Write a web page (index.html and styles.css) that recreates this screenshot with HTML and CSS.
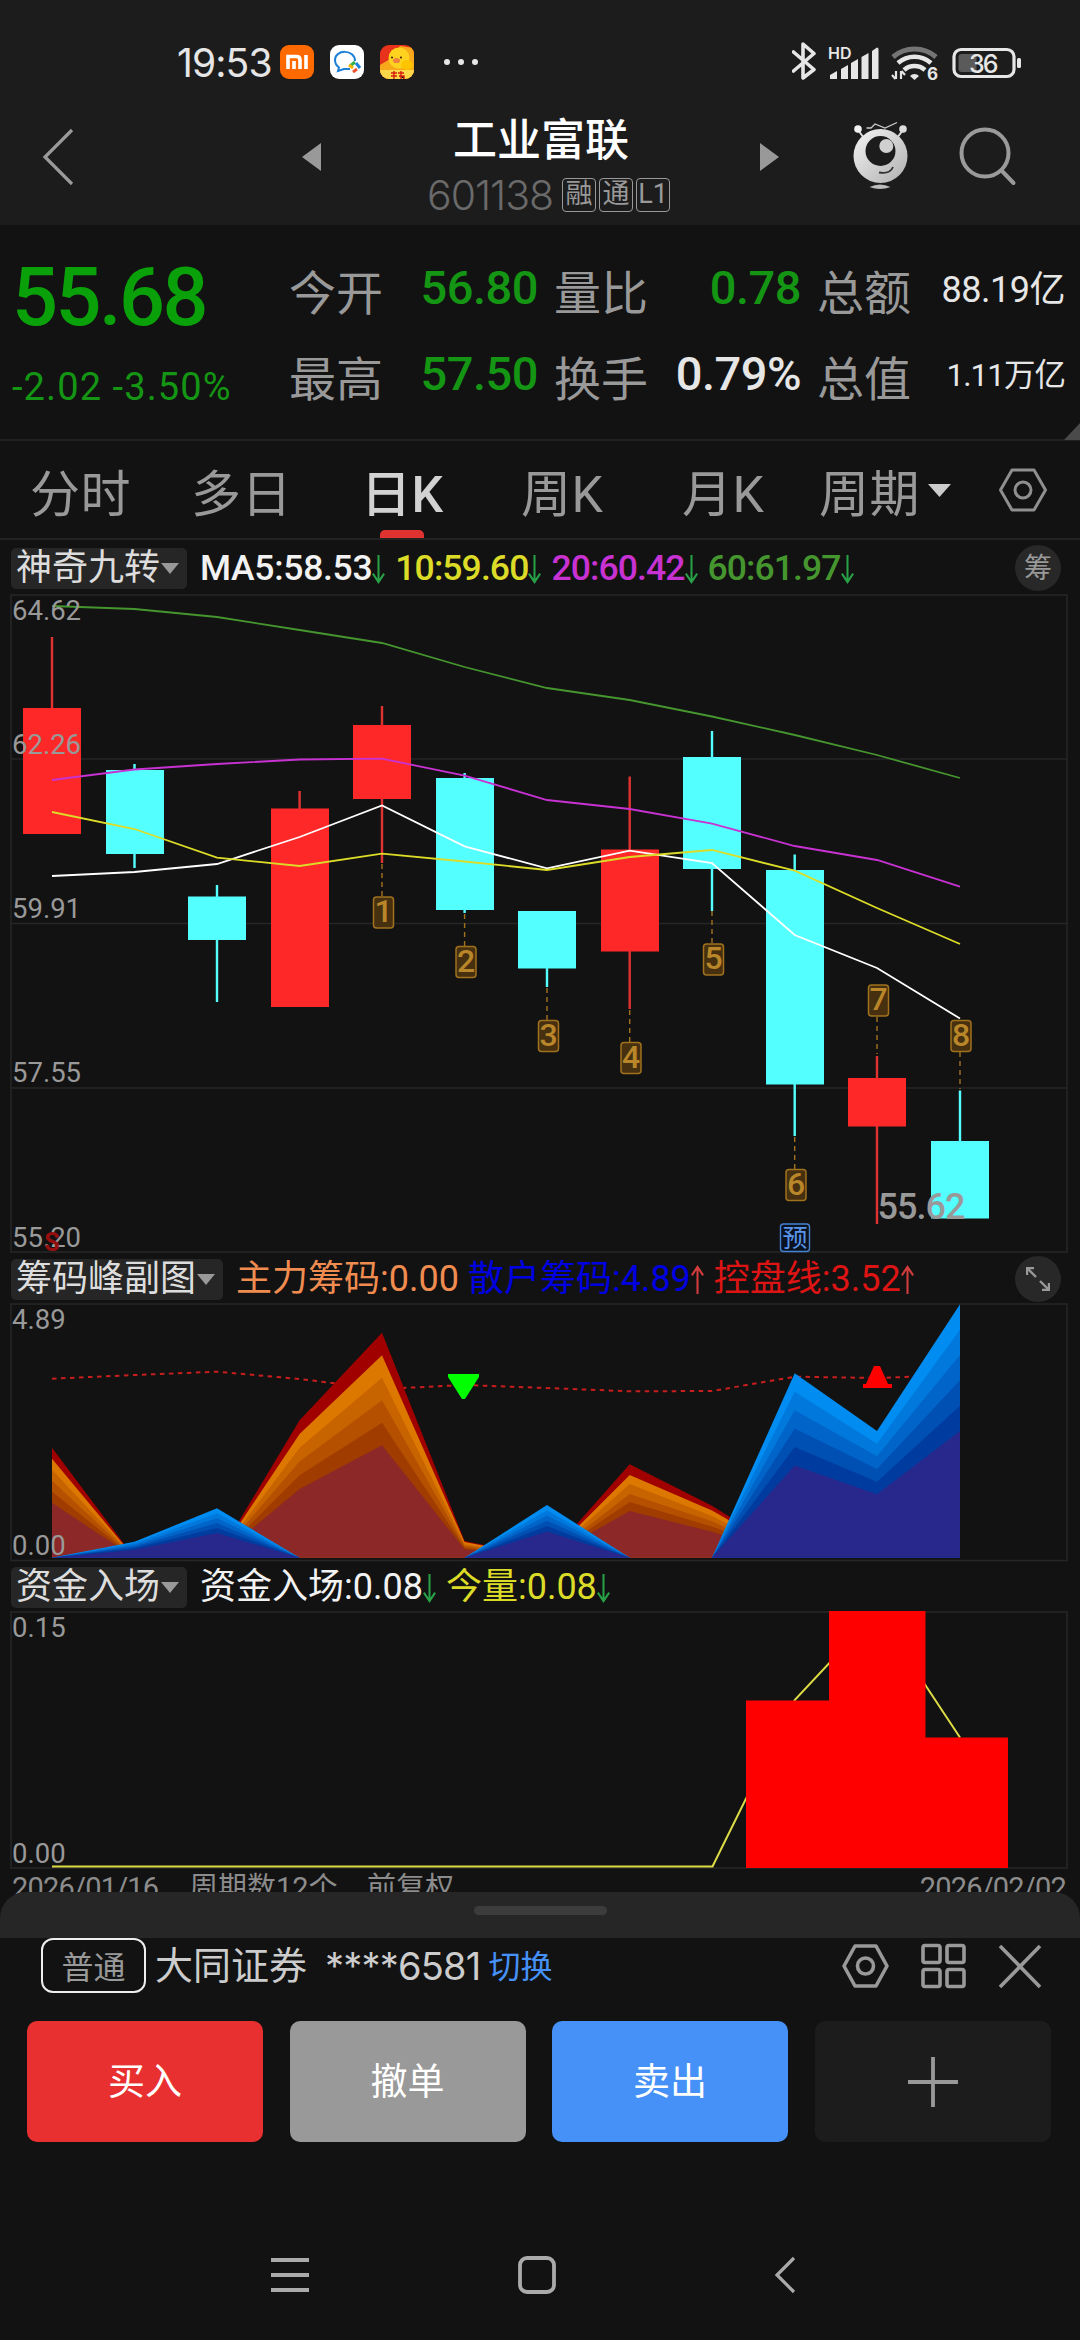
FILE: index.html
```html
<!DOCTYPE html>
<html lang="zh-CN">
<head>
    <meta charset="UTF-8">
    <meta name="viewport" content="width=device-width, initial-scale=1.0">
    <title>工业富联 601138</title>
    <link rel="stylesheet" href="styles.css">
</head>
<body>
    <div class="status-bar">
        <span class="clock">19:53</span>
        <svg class="app-icon" width="34" height="34" viewBox="0 0 34 34">
            <rect width="34" height="34" rx="9" fill="#ff6a00"/>
            <path d="M8 24V11.500h8.500q3.500 0 3.500 3.500V24M14 16v8M26 10V24" fill="none" stroke="#fff" stroke-width="3.600"/>
        </svg>
        <svg class="app-icon" width="34" height="34" viewBox="0 0 34 34">
            <rect width="34" height="34" rx="9" fill="#fff"/>
            <path d="M25 16C25 4 5 4 5 15c0 4 2 6 4 7.500L8 26l6-2h6" fill="none" stroke="#1c7fd6" stroke-width="2"/>
            <path d="M20 21l5-4" stroke="#35b34a" stroke-width="3"/>
            <path d="M26 18l4 5" stroke="#1c7fd6" stroke-width="3"/>
            <path d="M19 20l4 3" stroke="#f7b500" stroke-width="3"/>
            <path d="M23 27l4-3" stroke="#f0532d" stroke-width="3"/>
        </svg>
        <svg class="app-icon" width="34" height="34" viewBox="0 0 34 34">
            <defs>
                <clipPath id="duckClip"><rect width="34" height="34" rx="9"/></clipPath>
            </defs>
            <g clip-path="url(#duckClip)">
                <rect width="34" height="34" fill="#e8331c"/>
                <path d="M0 20L10 14 20 1 34 3V34H0z" fill="#f7a81b"/>
                <circle cx="19" cy="13" r="10.500" fill="#ffd21f"/>
                <ellipse cx="27" cy="20" rx="6" ry="5" fill="#ffc400"/>
                <ellipse cx="16.500" cy="15.500" rx="3.500" ry="2.600" fill="#f08040"/>
                <circle cx="12" cy="12.500" r="1" fill="#3a1a00"/>
                <circle cx="21" cy="12.500" r="1" fill="#3a1a00"/>
                <rect y="25" width="34" height="9" fill="#ffd84a"/>
                <path d="M11 28h6M11 31h6M14 26v8M18 28h6M19 31h5v3M21 26v8" stroke="#d3200f" stroke-width="1.400"/>
            </g>
        </svg>
        <span class="dots"><i></i><i></i><i></i></span>
        <svg class="signals" width="240" height="44" viewBox="0 0 240 44">
            <g fill="none" stroke="#e6e6e6">
                <path d="M1.500 12L22 29.500 11 38V4L22 13.500 1.500 31" stroke-width="3.600" stroke-linejoin="round" stroke-linecap="round"/>
                <path d="M101 17a33 33 0 0 1 43 0" stroke="#757575" stroke-width="5"/>
                <path d="M106 23a25 25 0 0 1 33 0" stroke-width="4.600"/>
                <path d="M112 30a16 16 0 0 1 21 0" stroke-width="4.600"/>
                <path d="M104 31v8M100 35l3.500 4M109 39v-8M113 35l-3.500-4" stroke-width="2.200"/>
                <rect x="162" y="9.500" width="60" height="27" rx="7" stroke-width="3.200"/>
            </g>
            <g fill="#e6e6e6">
                <path d="M38 39v-4l7-4v8zM49 39V29l7-4v14zM59 39V23l7-4v20zM69.500 39V17l7-4v26zM80 39V11l5-3.500q1.500 0 1.500 2V39z"/>
                <path d="M118 36a6 6 0 0 1 9 0l-4.500 4z"/>
                <rect x="225" y="18" width="4" height="10" rx="1.500"/>
            </g>
            <rect x="166.500" y="14" width="18" height="18" rx="3" fill="#5a5a5a"/>
            <text x="36" y="18.500" class="hd">HD</text>
            <text x="135" y="40" class="six">6</text>
            <text x="177" y="32.500" class="battery">36</text>
        </svg>
    </div>

    <header>
        <svg class="back" width="34" height="58" viewBox="0 0 34 58"><path d="M31 2L4 29l27 27" fill="none" stroke="#9a9a9a" stroke-width="3.200"/></svg>
        <svg class="prev" width="19" height="28" viewBox="0 0 19 28"><path d="M19 0v28L0 14z" fill="#999"/></svg>
        <div class="title-box">
            <h1>工业富联</h1>
            <div class="code-row">
                <span class="code">601138</span>
                <span class="tag">融</span>
                <span class="tag">通</span>
                <span class="tag">L1</span>
            </div>
        </div>
        <svg class="next" width="19" height="28" viewBox="0 0 19 28"><path d="M0 0v28l19-14z" fill="#999"/></svg>
        <svg class="robot" width="60" height="72" viewBox="0 0 60 72">
            <defs>
                <linearGradient id="robotFill" x1="0" y1="0" x2="1" y2="1">
                    <stop offset="0" stop-color="#f4f4f4"/>
                    <stop offset="1" stop-color="#b0b0b0"/>
                </linearGradient>
            </defs>
            <path d="M7 9l6 8M52 9l-6 8" stroke="#ddd" stroke-width="2"/>
            <circle cx="7" cy="8" r="3.800" fill="#f2f2f2"/>
            <circle cx="52" cy="8" r="3.800" fill="#ddd"/>
            <path d="M15.500 7h4.500l4-4 10 4L46 1.500" fill="none" stroke="#ccc" stroke-width="1.300"/>
            <circle cx="29.500" cy="35" r="27" fill="url(#robotFill)"/>
            <circle cx="29.500" cy="30" r="15" fill="#1c1c1c"/>
            <circle cx="35.300" cy="25" r="7" fill="#d0d0d0"/>
            <path d="M28 51.500q11 2 14-5.500" fill="none" stroke="#333" stroke-width="1.800"/>
            <path d="M18.500 66q10.500-5 21 0-10.500 4-21 0z" fill="#bbb"/>
        </svg>
        <svg class="search" width="60" height="60" viewBox="0 0 60 60"><circle cx="26" cy="26" r="23.500" fill="none" stroke="#9a9a9a" stroke-width="4"/><path d="M43 44l11.500 12" stroke="#9a9a9a" stroke-width="4" stroke-linecap="round"/></svg>
    </header>

    <section class="quote">
        <div class="price-box">
            <div class="price">55.68</div>
            <div class="change">-2.02 -3.50%</div>
        </div>
        <div class="stats">
            <div class="stat"><label>今开</label><b class="down">56.80</b></div>
            <div class="stat"><label>量比</label><b class="down">0.78</b></div>
            <div class="stat"><label>总额</label><b class="amount">88.19亿</b></div>
            <div class="stat"><label>最高</label><b class="down">57.50</b></div>
            <div class="stat"><label>换手</label><b>0.79%</b></div>
            <div class="stat"><label>总值</label><b class="amount small">1.11万亿</b></div>
        </div>
        <i class="corner"></i>
    </section>

    <nav class="tabs">
        <a>分时</a>
        <a>多日</a>
        <a class="active">日K</a>
        <a>周K</a>
        <a>月K</a>
        <a>周期<svg width="23" height="13" viewBox="0 0 23 13"><path d="M0 0h23L11.500 13z" fill="#ccc"/></svg></a>
        <svg class="gear" width="50" height="46" viewBox="0 0 50 46"><path d="M14 3h22l11.500 20L36 43H14L2.500 23z" fill="none" stroke="#8f8f8f" stroke-width="3" stroke-linejoin="round"/><circle cx="25" cy="23" r="8" fill="none" stroke="#8f8f8f" stroke-width="3"/></svg>
    </nav>

    <!-- K线主图 -->
    <div class="legend first">
        <span class="pill">神奇九转<i></i></span>
        <span class="item white">MA5:58.53<svg class="arr" viewBox="0 0 16 32"><path d="M8 1v28M2 21l6 9 6-9"/></svg></span>
        <span class="item yellow">10:59.60<svg class="arr" viewBox="0 0 16 32"><path d="M8 1v28M2 21l6 9 6-9"/></svg></span>
        <span class="item magenta">20:60.42<svg class="arr" viewBox="0 0 16 32"><path d="M8 1v28M2 21l6 9 6-9"/></svg></span>
        <span class="item green">60:61.97<svg class="arr" viewBox="0 0 16 32"><path d="M8 1v28M2 21l6 9 6-9"/></svg></span>
        <span class="round">筹</span>
    </div>
    <svg class="chart" width="1080" height="660" viewBox="0 594 1080 660">
        <g class="grid">
            <rect x="11" y="595" width="1056" height="657"/>
            <path d="M11 759H1067M11 923.500H1067M11 1088H1067"/>
        </g>
        <g class="up">
            <path d="M52 637V708M299.600 791V809M382 706V863M629.700 776.500V1009M877 1056V1224"/>
            <rect x="23" y="708" width="58" height="126"/>
            <rect x="271" y="808.500" width="58" height="198.500"/>
            <rect x="353" y="725" width="58" height="74"/>
            <rect x="601" y="849.500" width="58" height="102"/>
            <rect x="848" y="1078" width="58" height="48.500"/>
        </g>
        <g class="fall">
            <path d="M134.500 764V868M217 885V1002M464.600 773V913M547 911V987M712 731V911M794.700 854.500V1136M960 1090.500V1219"/>
            <rect x="106" y="770" width="58" height="84"/>
            <rect x="188" y="896.500" width="58" height="43.500"/>
            <rect x="436" y="778" width="58" height="132"/>
            <rect x="518" y="911" width="58" height="57.500"/>
            <rect x="683" y="757" width="58" height="112"/>
            <rect x="766" y="870" width="58" height="214.500"/>
            <rect x="931" y="1141" width="58" height="77.500"/>
        </g>
        <g class="line">
            <polyline stroke="#46962f" points="52,606 134.500,609 217,617 299.600,630 382,643 464.600,667 547,688 629.700,700 712,716.500 794.700,735 877,755 960,778"/>
            <polyline stroke="#c832d2" points="52,780 134.500,769.500 217,764 299.600,759.500 382,758.700 464.600,775.600 547,800 629.700,809 712,823.700 794.700,846 877,860 960,886.600"/>
            <polyline stroke="#fff" points="52,876 134.500,872 217,864 299.600,837 382,805.500 464.600,846.300 547,868.400 629.700,850.600 712,863 794.700,935 877,968 960,1018.500"/>
            <polyline stroke="#dcdc28" points="52,812 134.500,829 217,857.600 299.600,866 382,853.700 464.600,861.500 547,870 629.700,857 712,850 794.700,870.600 877,908 960,944"/>
        </g>
        <g class="dash">
            <path d="M382 864V897M464.600 914V946M547 988V1020M629.700 1010V1042M712 911V944M794.700 1137V1169M877 1017V1054M960 1052V1089"/>
        </g>
        <g class="mark">
            <rect x="373.500" y="897" width="20" height="31" rx="3"/><text x="383.500" y="922">1</text>
            <rect x="456" y="946.500" width="20" height="31" rx="3"/><text x="466" y="971.500">2</text>
            <rect x="538.500" y="1020.500" width="20" height="31" rx="3"/><text x="548.500" y="1045.500">3</text>
            <rect x="621" y="1042.500" width="20" height="31" rx="3"/><text x="631" y="1067.500">4</text>
            <rect x="703.500" y="944" width="20" height="31" rx="3"/><text x="713.500" y="969">5</text>
            <rect x="786" y="1169.500" width="20" height="31" rx="3"/><text x="796" y="1194.500">6</text>
            <rect x="868.500" y="985" width="20" height="31" rx="3"/><text x="878.500" y="1010">7</text>
            <rect x="951" y="1020.500" width="20" height="31" rx="3"/><text x="961" y="1045.500">8</text>
        </g>
        <rect class="forecast-box" x="780.500" y="1224" width="29" height="27.500" rx="3"/>
        <text class="forecast" x="795" y="1247">预</text>
        <g class="axis">
            <text x="12" y="620">64.62</text>
            <text x="12" y="754">62.26</text>
            <text x="12" y="917.500">59.91</text>
            <text x="12" y="1082">57.55</text>
            <text x="12" y="1246.500">55.20</text>
            <text x="877.500" y="1218.500" class="low">55.62</text>
        </g>
        <text class="sell" x="52" y="1251">S</text>
    </svg>

    <!-- 筹码峰副图 -->
    <div class="legend">
        <span class="pill">筹码峰副图<i></i></span>
        <span class="item orange">主力筹码:0.00</span>
        <span class="item blue">散户筹码:4.89<svg class="arr rise" viewBox="0 0 16 32"><path d="M8 31V3M2 11l6-9 6 9"/></svg></span>
        <span class="item red">控盘线:3.52<svg class="arr rise" viewBox="0 0 16 32"><path d="M8 31V3M2 11l6-9 6 9"/></svg></span>
        <span class="round"><svg width="24" height="24" viewBox="0 0 24 24"><path d="M1 8V1h7M1 1l9 9M23 16v7h-7M23 23l-9-9" fill="none" stroke="#999" stroke-width="2.400"/></svg></span>
    </div>
    <svg class="chart" width="1080" height="259" viewBox="0 1303 1080 259">
        <g class="grid">
            <rect x="11" y="1304" width="1056" height="256.500"/>
        </g>
        <polyline class="control" points="52,1378.700 134.500,1375 217,1371.700 299.600,1379 382,1389 464.600,1385 547,1388 629.700,1391.300 712,1391 794.700,1376.700 877,1378 960,1375"/>
        <!-- 主力: 100% 90% 80% 70% 60% 50% -->
        <g>
            <path fill="#a00000" d="M52 1557.700V1447.700L134.500 1557.700H217L299.600 1420.300 382 1332.700 464.600 1541 547 1557.700 629.700 1464.300 712 1505.700 794.700 1557.700z"/>
            <path fill="#dc7800" d="M52 1557.700V1458.700L134.500 1557.700H217L299.600 1434 382 1355.200 464.600 1542 547 1557.700 629.700 1475 712 1510.500 794.700 1557.700z"/>
            <path fill="#c86400" d="M52 1557.700V1469.700L134.500 1557.700H217L299.600 1447.800 382 1377.700 464.600 1544.300 547 1557.700 629.700 1484 712 1516 794.700 1557.700z"/>
            <path fill="#b45000" d="M52 1557.700V1480.700L134.500 1557.700H217L299.600 1461.500 382 1400.200 464.600 1546 547 1557.700 629.700 1494 712 1521.300 794.700 1557.700z"/>
            <path fill="#a03c00" d="M52 1557.700V1491.700L134.500 1557.700H217L299.600 1475.300 382 1422.700 464.600 1547.700 547 1557.700 629.700 1502 712 1526.500 794.700 1557.700z"/>
            <path fill="#8c2828" d="M52 1557.700V1502.700L134.500 1557.700H217L299.600 1489 382 1445.200 464.600 1549.300 547 1557.700 629.700 1511 712 1531.700 794.700 1557.700z"/>
        </g>
        <!-- 散户 -->
        <g>
            <path fill="#008cf0" d="M52 1557.700L134.500 1541.700 217 1508.300 299.600 1557.700zM464.600 1557.700L547 1505 629.700 1557.700zM712 1557.700L794.700 1373.300 877 1431 960 1304.300V1557.700z"/>
            <path fill="#0078dc" d="M52 1557.700L134.500 1543.300 217 1513.200 299.600 1557.700zM464.600 1557.700L547 1510.300 629.700 1557.700zM712 1557.700L794.700 1391.700 877 1443.700 960 1329.700V1557.700z"/>
            <path fill="#0064c8" d="M52 1557.700L134.500 1544.900 217 1518.200 299.600 1557.700zM464.600 1557.700L547 1515.500 629.700 1557.700zM712 1557.700L794.700 1410.200 877 1456.300 960 1355V1557.700z"/>
            <path fill="#0050b4" d="M52 1557.700L134.500 1546.500 217 1523.100 299.600 1557.700zM464.600 1557.700L547 1520.800 629.700 1557.700zM712 1557.700L794.700 1428.600 877 1469 960 1380.300V1557.700z"/>
            <path fill="#003ca0" d="M52 1557.700L134.500 1548.100 217 1528.100 299.600 1557.700zM464.600 1557.700L547 1526.100 629.700 1557.700zM712 1557.700L794.700 1447.100 877 1481.700 960 1405.700V1557.700z"/>
            <path fill="#28288c" d="M52 1557.700L134.500 1549.700 217 1533 299.600 1557.700zM464.600 1557.700L547 1531.400 629.700 1557.700zM712 1557.700L794.700 1465.500 877 1494.300 960 1431V1557.700z"/>
        </g>
        <path fill="#00ff00" d="M448 1374h31v3l-14 22h-3l-14-22z"/>
        <path fill="#ff0000" d="M863 1388v-4h3l8-18h6l8 18h4v4z"/>
        <g class="axis">
            <text x="12" y="1329">4.89</text>
            <text x="12" y="1555">0.00</text>
        </g>
    </svg>

    <!-- 资金入场 -->
    <div class="legend">
        <span class="pill">资金入场<i></i></span>
        <span class="item white">资金入场:0.08<svg class="arr" viewBox="0 0 16 32"><path d="M8 1v28M2 21l6 9 6-9"/></svg></span>
        <span class="item yellow">今量:0.08<svg class="arr" viewBox="0 0 16 32"><path d="M8 1v28M2 21l6 9 6-9"/></svg></span>
    </div>
    <svg class="chart" width="1080" height="258" viewBox="0 1611 1080 258">
        <g class="grid">
            <rect x="11" y="1612" width="1056" height="256"/>
        </g>
        <polyline class="flow" points="52,1866.500 712.500,1866.500 794.700,1700 877,1612 960,1737.500"/>
        <path fill="#ff0000" d="M746 1868V1700.500H829V1611H925.500V1737.500H1008V1868z"/>
        <g class="axis">
            <text x="12" y="1637">0.15</text>
            <text x="12" y="1862.500">0.00</text>
        </g>
    </svg>
    <div class="range">
        <span class="start">2026/01/16</span>
        <span class="count">周期数12个</span>
        <span>前复权</span>
        <span class="end">2026/02/02</span>
    </div>

    <!-- 交易面板 -->
    <section class="sheet">
        <div class="grip"><i></i></div>
        <div class="account">
            <span class="kind">普通</span>
            <span class="broker">大同证券</span>
            <span class="acct">****6581</span>
            <a class="switch">切换</a>
            <svg class="tools" width="202" height="48" viewBox="0 0 202 48">
                <g fill="none" stroke="#999" stroke-width="3.600">
                    <path d="M14 4h21l11 20-11 20H14L3 24z" stroke-linejoin="round"/>
                    <circle cx="24.500" cy="24" r="8"/>
                    <rect x="82" y="3.500" width="17" height="17" rx="2"/>
                    <rect x="106" y="3.500" width="17" height="17" rx="2"/>
                    <rect x="82" y="27.500" width="17" height="17" rx="2"/>
                    <rect x="106" y="27.500" width="17" height="17" rx="2"/>
                    <path d="M159 4l40 41M199 4l-40 41"/>
                </g>
            </svg>
        </div>
        <div class="buttons">
            <button class="btn buy">买入</button>
            <button class="btn cancel">撤单</button>
            <button class="btn sell-btn">卖出</button>
            <button class="btn add"><svg width="50" height="50" viewBox="0 0 50 50"><path d="M25 0v50M0 25h50" stroke="#999" stroke-width="3.800"/></svg></button>
        </div>
    </section>

    <footer>
        <svg width="38" height="36" viewBox="0 0 38 36"><path d="M0 3h38M0 18h38M0 33h38" stroke="#aaa" stroke-width="3.800"/></svg>
        <svg width="38" height="38" viewBox="0 0 38 38"><rect x="2" y="2" width="34" height="34" rx="7" fill="none" stroke="#aaa" stroke-width="3.800"/></svg>
        <svg width="22" height="38" viewBox="0 0 22 38"><path d="M20 2L3 19l17 17" fill="none" stroke="#aaa" stroke-width="3.200"/></svg>
    </footer>
</body>
</html>
```

FILE: styles.css
```css
:root {
    --bg: #121212;
    --bar: #1c1c1c;
    --panel: #262626;
    --label: #999;
    --down: #0aa00a;
    --num: Roboto, "Noto Sans CJK SC", sans-serif;
    --cjk: "Noto Sans CJK SC", sans-serif;
}

* {
    box-sizing: border-box;
}

body {
    margin: 0;
    width: 1080px;
    height: 2340px;
    overflow: hidden;
    background: var(--bg);
    color: #e6e6e6;
    font-family: var(--num);
    display: flex;
    flex-direction: column;
}

svg {
    display: block;
    flex: none;
}

/* 状态栏 */
.status-bar {
    height: 92px;
    background: var(--bar);
    display: flex;
    align-items: center;
    padding: 32px 0 0 177px;
    flex: none;
}

.clock {
    width: 103px;
    font-family: Inter, sans-serif;
    font-size: 39px;
    letter-spacing: -0.9px;
    white-space: nowrap;
}

.app-icon {
    margin-right: 16px;
}

.dots {
    display: flex;
    gap: 8px;
    margin-left: 14px;
}

.dots i {
    width: 6px;
    height: 6px;
    border-radius: 50%;
    background: #e6e6e6;
}

.signals {
    margin-left: auto;
    margin-right: 48px;
}

.signals text {
    font-family: Inter, sans-serif;
    fill: #e6e6e6;
}

.hd {
    font-size: 16px;
    font-weight: 600;
}

.six {
    font-size: 17px;
    font-weight: 700;
}

.signals .battery {
    font-size: 25px;
    font-weight: 500;
    letter-spacing: -2px;
}

/* 标题栏 */
header {
    height: 133px;
    background: var(--bar);
    display: flex;
    align-items: center;
    flex: none;
}

.back {
    margin: -3px 0 0 41px;
}

.prev {
    margin: -3px 0 0 227px;
}

.next {
    margin-top: -3px;
}

.title-box {
    width: 302px;
    margin: 0 68px 0 69px;
}

h1 {
    margin: 0;
    padding-top: 5px;
    font: 500 44px/54px var(--cjk);
    color: #fff;
    text-align: center;
}

.code-row {
    display: flex;
    align-items: center;
    height: 36px;
    margin: 13px 0 0 37px;
}

.code {
    width: 135px;
    font: 300 41px/36px Inter, sans-serif;
    letter-spacing: -1px;
    color: #6a6a6a;
}

.tag {
    width: 34px;
    height: 34px;
    margin-right: 3px;
    border: 1.5px solid #999;
    border-radius: 4px;
    font: 27px/31px var(--num);
    text-align: center;
    color: #999;
}

.robot {
    margin: -3px 0 0 72px;
}

.search {
    margin: -3px 0 0 48px;
}

/* 行情 */
.quote {
    position: relative;
    height: 216px;
    border-bottom: 2px solid #222;
    display: flex;
    flex: none;
}

.price-box {
    width: 289px;
    padding: 28px 0 0 12px;
    color: var(--down);
}

.price {
    font-size: 81px;
    font-weight: 500;
    line-height: 90px;
    letter-spacing: -2.5px;
}

.change {
    margin-top: 24px;
    font-size: 38px;
    line-height: 40px;
    letter-spacing: 1.1px;
    white-space: nowrap;
    color: #149614;
}

.stats {
    display: grid;
    grid-template-columns: 249px 247px 248px;
    grid-template-rows: 86px 86px;
    column-gap: 16px;
    padding-top: 22px;
}

.stat {
    display: flex;
    justify-content: space-between;
    align-items: center;
}

.stat label {
    font: 400 47px/60px var(--cjk);
    color: var(--label);
}

.stat b {
    padding-bottom: 4px;
    font-size: 47px;
    font-weight: 500;
    line-height: 60px;
    letter-spacing: -0.5px;
}

.stat .down {
    color: #149614;
}

.stat .amount {
    padding: 0;
    font-size: 36px;
    font-weight: 400;
}

.stat .small {
    font-size: 31.500px;
    letter-spacing: -1px;
}

.corner {
    position: absolute;
    right: 0;
    bottom: -1px;
    border: solid transparent;
    border-width: 17px 0 0 16px;
    border-bottom: 17px solid #4a4a4a;
    border-top: 0;
}

/* 周期切换 */
.tabs {
    height: 99px;
    border-bottom: 2px solid #222;
    padding: 0 32px 0 30px;
    display: flex;
    align-items: center;
    flex: none;
    color: var(--label);
    font: 400 50px/85px var(--num);
}

.tabs a {
    position: relative;
    width: 161px;
    height: 97px;
    padding-top: 12px;
    display: flex;
    align-items: center;
    white-space: nowrap;
    letter-spacing: 0.5px;
}

.tabs a:nth-child(3) {
    padding-left: 9px;
}

.tabs a:nth-child(4),
.tabs a:nth-child(5) {
    padding-left: 8px;
}

.tabs a:nth-child(6) {
    margin-left: -16px;
    gap: 8px;
}

.tabs a:nth-child(6) svg {
    margin-top: -10px;
}

.tabs .active {
    color: #d2d2d2;
    font-weight: 500;
}

.tabs .active::after {
    content: "";
    position: absolute;
    left: 28px;
    bottom: 0;
    width: 44px;
    height: 8px;
    border-radius: 5px 5px 0 0;
    background: #e13232;
}

.gear {
    margin-left: auto;
}

/* 指标说明 */
.legend {
    height: 49px;
    padding: 1px 19px 0 11px;
    display: flex;
    align-items: center;
    flex: none;
    font-size: 36px;
    line-height: 41px;
    white-space: nowrap;
}

.legend.first {
    height: 54px;
    padding-top: 2px;
}

.pill {
    display: flex;
    align-items: center;
    height: 41px;
    padding: 1px 8px 0 5px;
    margin-right: 13px;
    border-radius: 5px;
    background: var(--panel);
    color: #ddd;
}

.pill i {
    margin-left: 1px;
    border: 9px solid transparent;
    border-top: 11px solid #999;
    border-bottom: 0;
}

.item {
    display: flex;
    align-items: center;
    margin-right: 9px;
    padding-top: 1px;
    font-size: 36px;
}

.first .item {
    font-size: 35.500px;
    font-weight: 500;
    letter-spacing: -0.9px;
}

.first .white {
    letter-spacing: -0.3px;
}

.arr {
    width: 15px;
    height: 32px;
    margin-left: -1px;
    fill: none;
    stroke: #28a046;
    stroke-width: 2.200;
}

.rise {
    stroke: #d23c3c;
}

.white { color: #f2f2f2; }
.yellow { color: #dcdc28; }
.magenta { color: #c832d2; }
.green { color: #46962f; }
.orange { color: #f08c50; }
.blue { color: #0000e1; }
.red { color: #dc1414; }

.round {
    width: 46px;
    height: 46px;
    margin-left: auto;
    border-radius: 50%;
    background: #282828;
    color: #999;
    font-size: 28px;
    display: flex;
    align-items: center;
    justify-content: center;
}

/* 图表 */
.grid rect,
.grid path {
    fill: none;
    stroke: #262626;
    stroke-width: 1.600;
}

.up rect { fill: #ff2828; }
.fall rect { fill: #54ffff; }

.up path {
    stroke: #e13232;
    stroke-width: 2.400;
}

.fall path {
    stroke: #54ffff;
    stroke-width: 2.400;
}

.line polyline {
    fill: none;
    stroke-width: 1.800;
}

.dash path {
    stroke: #a0721e;
    stroke-width: 1.400;
    stroke-dasharray: 5 4;
}

.mark rect {
    fill: #46300f;
    stroke: #a0721e;
    stroke-width: 1.500;
}

.mark text {
    font-size: 32px;
    font-weight: 500;
    text-anchor: middle;
    fill: #b9862a;
}

.forecast-box {
    fill: #0a1220;
    stroke: #4682d2;
    stroke-width: 1.400;
}

.forecast {
    font: 25px var(--cjk);
    text-anchor: middle;
    fill: #5a96eb;
}

.axis text {
    font-size: 27.500px;
    fill: #999;
}

.axis .low {
    font-size: 36px;
    font-weight: 500;
    letter-spacing: -1px;
}

.sell {
    font: bold 25px var(--num);
    text-anchor: middle;
    fill: #960f0f;
}

.control {
    fill: none;
    stroke: #c81e1e;
    stroke-width: 2;
    stroke-dasharray: 4.500 4.500;
}

.flow {
    fill: none;
    stroke: #dcdc46;
    stroke-width: 2;
}

.range {
    height: 23px;
    padding: 0 14px 0 12px;
    display: flex;
    flex: none;
    font-size: 29px;
    line-height: 38px;
    color: #8c8c8c;
    white-space: nowrap;
}

.start {
    width: 177px;
    letter-spacing: -0.8px;
}

.count {
    width: 178px;
}

.end {
    margin-left: auto;
    letter-spacing: -0.8px;
}

/* 交易面板 */
.sheet {
    position: relative;
    height: 250px;
    flex: none;
    background: var(--bg);
    border-radius: 26px 26px 0 0;
}

.grip {
    height: 46px;
    padding-top: 14px;
    border-radius: 26px 26px 0 0;
    background: var(--panel);
}

.grip i {
    display: block;
    width: 133px;
    height: 9px;
    margin: 0 auto;
    border-radius: 5px;
    background: #3c3c3c;
}

.account {
    height: 55px;
    padding: 0 37px 0 41px;
    display: flex;
    align-items: center;
    font-size: 38px;
    line-height: 56px;
    color: #ccc;
}

.kind {
    width: 105px;
    height: 55px;
    border: 2px solid #eee;
    border-radius: 12px;
    font-size: 32px;
    line-height: 57px;
    text-align: center;
    color: var(--label);
}

.broker {
    margin-left: 9px;
}

.acct {
    margin-left: 18px;
    font-family: Inter, sans-serif;
    letter-spacing: -0.8px;
}

.switch {
    margin: 3px 0 0 8px;
    font-size: 32px;
    color: #4691f7;
}

.tools {
    margin-left: auto;
}

.buttons {
    display: grid;
    grid-template-columns: repeat(4, 236px);
    column-gap: 26.500px;
    padding: 28px 0 0 27px;
}

.btn {
    height: 121px;
    border: 0;
    padding: 0 0 5px;
    border-radius: 10px;
    font: 37px var(--cjk);
    color: #fff;
    display: flex;
    align-items: center;
    justify-content: center;
}

.buy { background: #e93030; }
.cancel { background: #999; }
.sell-btn { background: #4691f7; }

.add {
    padding: 0;
    background: #1c1c1c;
}

footer {
    height: 202px;
    padding: 68px 0 0 271px;
    display: flex;
    align-items: center;
    gap: 209px;
}

footer svg:last-child {
    margin-left: 9px;
}
```
